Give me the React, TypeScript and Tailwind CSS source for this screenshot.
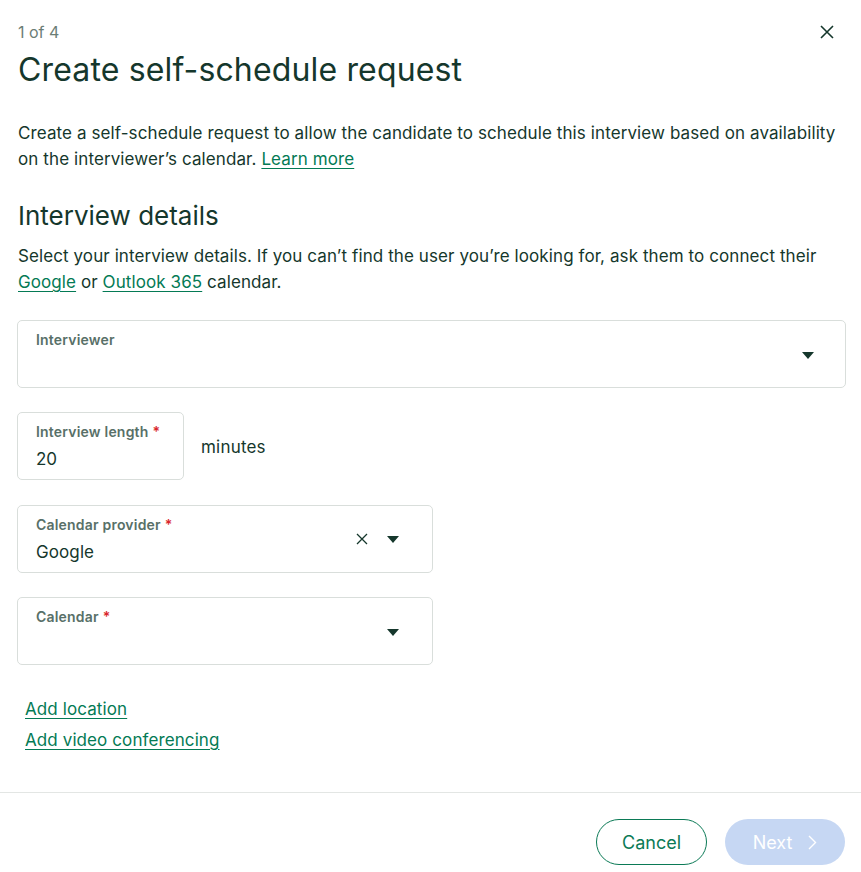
import React from "react";

const Caret = () => (
  <svg width="14" height="9" viewBox="0 0 14 9" className="block">
    <path d="M1 1 L13 1 L7 8 Z" fill="#15372c" />
  </svg>
);

const Label = ({ text, required }: { text: string; required?: boolean }) => (
  <div className="text-[14px] leading-[18px] font-semibold text-[#587068] tracking-[0.2px]">
    {text}
    {required && <span className="text-[#d9262b] ml-[4px]">*</span>}
  </div>
);

export default function App() {
  return (
    <div
      className="w-[861px] h-[872px] bg-white text-[#15372c] flex flex-col"
      style={{ fontFamily: "Inter, 'Noto Sans', sans-serif" }}
    >
      <div className="flex-1 px-[18px] pt-[20px]">
        <div className="flex items-start justify-between">
          <div className="text-[16px] leading-[24px] text-[#6b7d76]">1 of 4</div>
          <button className="mt-[4px] mr-[8px] w-[16px] h-[16px] flex items-center justify-center">
            <svg width="14" height="14" viewBox="0 0 14 14">
              <path d="M1 1 L13 13 M13 1 L1 13" stroke="#15372c" strokeWidth="1.6" />
            </svg>
          </button>
        </div>
        <h1 className="mt-[6px] text-[32px] leading-[40px] font-normal tracking-[0.15px]">
          Create self-schedule request
        </h1>
        <p className="mt-[30px] text-[17px] leading-[26px] tracking-[0.1px] text-[#15372c]">
          <span>
            Create a self-schedule request to allow the candidate to schedule this interview based on availability
            on the interviewer’s calendar.
          </span>{" "}
          <a className="text-[#047a55] underline underline-offset-[3px]" href="#">
            Learn more
          </a>
        </p>
        <h2 className="mt-[28px] text-[26px] leading-[32px] font-normal">Interview details</h2>
        <p className="mt-[11px] text-[17px] leading-[26px] tracking-[0.09px]">
          Select your interview details. If you can’t find the user you’re looking for, ask them to connect their{" "}
          <a className="text-[#047a55] underline underline-offset-[3px]" href="#">
            Google
          </a>{" "}
          or{" "}
          <a className="text-[#047a55] underline underline-offset-[3px]" href="#">
            Outlook 365
          </a>{" "}
          calendar.
        </p>

        <div className="mt-[25px] ml-[-1px] w-[829px] h-[68px] border border-[#d9dedb] rounded-[5px] flex items-start pl-[18px] pr-[30px] pt-[10px]">
          <div className="flex-1">
            <Label text="Interviewer" />
          </div>
          <div className="mt-[20px]">
            <Caret />
          </div>
        </div>

        <div className="mt-[24px] ml-[-1px] flex items-start">
          <div className="w-[167px] h-[68px] border border-[#d9dedb] rounded-[5px] pl-[18px] pt-[10px]">
            <Label text="Interview length" required />
            <div className="mt-[5px] text-[17px] leading-[26px]">20</div>
          </div>
          <div className="ml-[17px] mt-[22px] text-[17px] leading-[26px] tracking-[0.2px]">minutes</div>
        </div>

        <div className="mt-[25px] ml-[-1px] w-[416px] h-[68px] border border-[#d9dedb] rounded-[5px] flex items-start pl-[18px] pr-[32px] pt-[10px]">
          <div className="flex-1">
            <Label text="Calendar provider" required />
            <div className="mt-[5px] text-[17px] leading-[26px] tracking-[0.1px]">Google</div>
          </div>
          <div className="mt-[17px] flex items-center">
            <svg width="12" height="12" viewBox="0 0 12 12">
              <path d="M1 1 L11 11 M11 1 L1 11" stroke="#15372c" strokeWidth="1.3" />
            </svg>
            <div className="ml-[18px]">
              <Caret />
            </div>
          </div>
        </div>

        <div className="mt-[24px] ml-[-1px] w-[416px] h-[68px] border border-[#d9dedb] rounded-[5px] flex items-start pl-[18px] pr-[32px] pt-[10px]">
          <div className="flex-1">
            <Label text="Calendar" required />
          </div>
          <div className="mt-[20px]">
            <Caret />
          </div>
        </div>

        <div className="mt-[31px] ml-[7px] flex flex-col gap-[5px] items-start">
          <a className="text-[17px] leading-[26px] tracking-[0.1px] text-[#047a55] underline underline-offset-[3px]" href="#">
            Add location
          </a>
          <a className="text-[17px] leading-[26px] tracking-[0.1px] text-[#047a55] underline underline-offset-[3px]" href="#">
            Add video conferencing
          </a>
        </div>
      </div>

      <div className="border-t border-[#e3e6e4] h-[80px] flex items-start justify-end pr-[16px] pt-[26px] gap-[18px]">
        <button className="w-[111px] h-[46px] rounded-full border border-[#0b7a56] text-[#0b7a56] text-[18px] flex items-center justify-center">
          Cancel
        </button>
        <button className="w-[120px] h-[46px] rounded-full bg-[#c6d7f3] text-white text-[18px] flex items-center justify-center gap-[16px]">
          Next
          <svg width="9" height="15" viewBox="0 0 9 15">
            <path d="M1 1 L7.5 7.5 L1 14" stroke="white" strokeWidth="1.4" fill="none" />
          </svg>
        </button>
      </div>
    </div>
  );
}
